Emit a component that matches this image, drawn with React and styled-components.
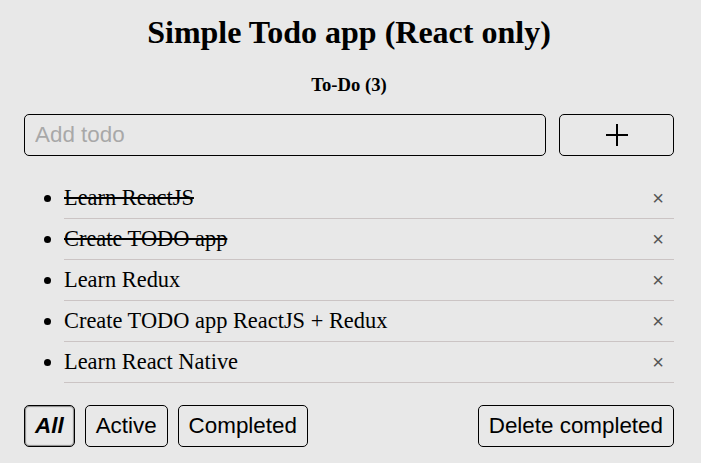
import React, { useState } from 'react'
import styled, { createGlobalStyle } from 'styled-components'

const GlobalStyle = createGlobalStyle`
  body {
    margin: 0;
    background: #e8e8e8;
    font-family: 'Liberation Serif', 'Times New Roman', serif;
    color: #000;
  }
`

const Wrapper = styled.div`
  box-sizing: border-box;
  max-width: 653px;
  margin: 0 auto;
  padding: 14px 3px 0 0;
`

const Title = styled.h1`
  margin: 0;
  text-align: center;
  font-size: 32px;
  line-height: 36px;
  font-weight: bold;
`

const Counter = styled.h3`
  margin: 24px 0 0;
  text-align: center;
  font-size: 18.7px;
  line-height: 22px;
  font-weight: bold;
`

const AddForm = styled.form`
  display: flex;
  gap: 13px;
  margin-top: 18px;
`

const TodoInput = styled.input`
  flex: 1;
  height: 42px;
  box-sizing: border-box;
  border: 1px solid #000;
  border-radius: 5px;
  background: transparent;
  padding: 0 10px;
  font-family: 'Liberation Sans', Arial, sans-serif;
  font-size: 22.4px;
  outline: none;
  &::placeholder {
    color: #a8a8a8;
  }
`

const Button = styled.button`
  height: 42px;
  box-sizing: border-box;
  padding: 0 10px;
  border: 1px solid #000;
  border-radius: 5px;
  background: transparent;
  font-family: 'Liberation Sans', Arial, sans-serif;
  font-size: 22.4px;
  color: #000;
  cursor: pointer;
  font-weight: ${(p) => (p.$active ? 'bold' : 'normal')};
  font-style: ${(p) => (p.$active ? 'italic' : 'normal')};
  box-shadow: ${(p) => (p.$active ? 'inset 0 0 1px 1px rgba(0,0,0,0.4)' : 'none')};
`

const AddButton = styled(Button)`
  width: 115px;
  display: flex;
  align-items: center;
  justify-content: center;
`

const List = styled.ul`
  margin: 22px 0 0;
  padding-left: 40px;
`

const Item = styled.li`
  border-bottom: 1px solid #cbc4c4;
  font-size: 22.4px;
  line-height: 40px;
`

const ItemRow = styled.div`
  display: flex;
  justify-content: space-between;
  align-items: center;
`

const ItemText = styled.span`
  text-decoration: ${(p) => (p.$done ? 'line-through' : 'none')};
`

const RemoveButton = styled.span`
  font-family: 'Liberation Sans', Arial, sans-serif;
  font-size: 20px;
  color: #555;
  padding-right: 10px;
  cursor: pointer;
`

const Footer = styled.div`
  display: flex;
  align-items: center;
  gap: 10px;
  margin-top: 22px;
`

const Spacer = styled.div`
  flex: 1;
`

const PlusIcon = () => (
  <svg width='22' height='22' viewBox='0 0 22 22'>
    <path d='M11 0V22M0 11H22' stroke='#000' strokeWidth='2' fill='none' />
  </svg>
)

const initialTodos = [
  { id: 1, text: 'Learn ReactJS', done: true },
  { id: 2, text: 'Create TODO app', done: true },
  { id: 3, text: 'Learn Redux', done: false },
  { id: 4, text: 'Create TODO app ReactJS + Redux', done: false },
  { id: 5, text: 'Learn React Native', done: false },
]

export default function App() {
  const [todos] = useState(initialTodos)
  const [filter, setFilter] = useState('all')
  const left = todos.filter((t) => !t.done).length

  return (
    <>
      <GlobalStyle />
      <Wrapper>
        <Title>Simple Todo app (React only)</Title>
        <Counter>To-Do ({left})</Counter>
        <AddForm onSubmit={(e) => e.preventDefault()}>
          <TodoInput placeholder='Add todo' />
          <AddButton type='submit' aria-label='Add'>
            <PlusIcon />
          </AddButton>
        </AddForm>
        <List>
          {todos.map((todo) => (
            <Item key={todo.id}>
              <ItemRow>
                <ItemText $done={todo.done}>{todo.text}</ItemText>
                <RemoveButton>×</RemoveButton>
              </ItemRow>
            </Item>
          ))}
        </List>
        <Footer>
          <Button $active={filter === 'all'} onClick={() => setFilter('all')}>
            All
          </Button>
          <Button $active={filter === 'active'} onClick={() => setFilter('active')}>
            Active
          </Button>
          <Button $active={filter === 'completed'} onClick={() => setFilter('completed')}>
            Completed
          </Button>
          <Spacer />
          <Button>Delete completed</Button>
        </Footer>
      </Wrapper>
    </>
  )
}
